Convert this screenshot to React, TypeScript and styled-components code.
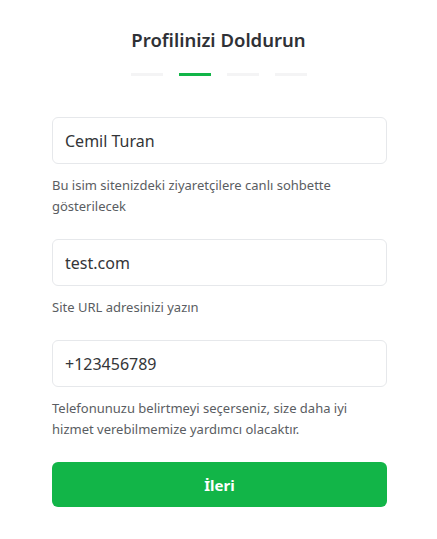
import styled, { createGlobalStyle } from 'styled-components';

const GlobalStyle = createGlobalStyle`
  body {
    margin: 0;
    background: #ffffff;
    font-family: "Segoe UI", "Noto Sans", "Open Sans", sans-serif;
  }
`;

const Page = styled.div`
  width: 437px;
  padding-top: 27px;
  display: flex;
  flex-direction: column;
  align-items: center;
`;

const Title = styled.h1`
  margin: 0;
  font-size: 18.5px;
  font-weight: 600;
  line-height: 26px;
  color: #2f3136;
`;

const Steps = styled.div`
  display: flex;
  gap: 16px;
  margin-top: 20px;
  margin-bottom: 41px;
`;

const StepBar = styled.div<{ $active?: boolean }>`
  width: 32px;
  height: 3px;
  background: ${({ $active }) => ($active ? '#12b548' : '#f4f4f5')};
`;

const Form = styled.form`
  width: 335px;
  margin-left: 2px;
  display: flex;
  flex-direction: column;
`;

const Field = styled.div`
  display: flex;
  flex-direction: column;
  margin-bottom: 22px;
`;

const Input = styled.input`
  box-sizing: border-box;
  width: 100%;
  height: 47px;
  padding: 0 12px;
  border: 1px solid #e6e8eb;
  border-radius: 6px;
  font-family: inherit;
  font-size: 16px;
  color: #333538;
  outline: none;
`;

const Help = styled.p`
  margin: 11px 0 0;
  font-size: 13px;
  line-height: 21px;
  color: #5a5d62;
`;

const NextButton = styled.button`
  height: 45px;
  border: none;
  border-radius: 6px;
  background: #12b548;
  color: #ffffff;
  font-family: inherit;
  font-size: 15px;
  font-weight: 700;
  cursor: pointer;
`;

export default function App() {
  return (
    <Page>
      <GlobalStyle />
      <Title>Profilinizi Doldurun</Title>
      <Steps>
        <StepBar />
        <StepBar $active />
        <StepBar />
        <StepBar />
      </Steps>
      <Form onSubmit={(e) => e.preventDefault()}>
        <Field>
          <Input defaultValue="Cemil Turan" />
          <Help>Bu isim sitenizdeki ziyaretçilere canlı sohbette gösterilecek</Help>
        </Field>
        <Field>
          <Input defaultValue="test.com" />
          <Help>Site URL adresinizi yazın</Help>
        </Field>
        <Field>
          <Input defaultValue="+123456789" />
          <Help>
            Telefonunuzu belirtmeyi seçerseniz, size daha iyi hizmet verebilmemize yardımcı
            olacaktır.
          </Help>
        </Field>
        <NextButton type="submit">İleri</NextButton>
      </Form>
    </Page>
  );
}
